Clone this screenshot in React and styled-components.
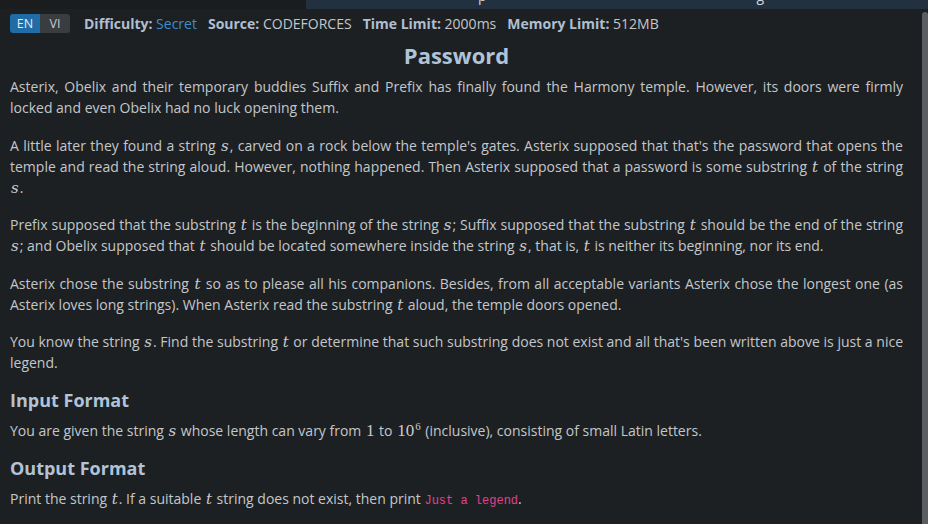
import React from "react";
import styled, { createGlobalStyle } from "styled-components";

const Global = createGlobalStyle`
  html, body { margin: 0; padding: 0; background: #1d2022; overflow: hidden; }
  body { font-family: "Open Sans", "Noto Sans", sans-serif; }
`;

const Page = styled.div`
  width: 928px;
  height: 524px;
  display: flex;
  flex-direction: column;
  background: #1d2022;
  overflow: hidden;
`;

const TopStrip = styled.div`
  height: 9px;
  display: flex;
  flex-shrink: 0;
`;

const StripDark = styled.div`
  width: 306px;
  background: #1a1c1e;
`;

const StripBlue = styled.div`
  flex: 1;
  background: #22303f;
  overflow: hidden;
`;

const StripText = styled.div`
  display: flex;
  margin-top: -13px;
  font-size: 14px;
  line-height: 18px;
  color: #d0d6dc;
  white-space: pre;
`;

const StripGlyph = styled.span`
  margin-left: ${(p) => p.$ml}px;
`;

const Main = styled.div`
  flex: 1;
  display: flex;
  min-height: 0;
`;

const Content = styled.div`
  flex: 1;
  padding: 5px 19px 0 10px;
  color: #c3c7cb;
  font-size: 14px;
  line-height: 21px;
`;

const ScrollTrack = styled.div`
  width: 6px;
  padding-top: 3px;
  display: flex;
`;

const ScrollThumb = styled.div`
  flex: 1;
  background: #5a5e62;
  border-radius: 3px 3px 0 0;
`;

const MetaRow = styled.div`
  display: flex;
  align-items: center;
  height: 19px;
  font-size: 14px;
`;

const LangToggle = styled.div`
  display: flex;
  height: 19px;
  border-radius: 3px;
  overflow: hidden;
  margin-right: 14px;
`;

const LangButton = styled.span`
  width: 30px;
  display: flex;
  align-items: center;
  justify-content: center;
  font-size: 12.5px;
  color: ${(p) => (p.$active ? "#e4ecf4" : "#c8ccd0")};
  background: ${(p) => (p.$active ? "#1f6ca6" : "#3a3d40")};
`;

const MetaItem = styled.span`
  margin-right: 11px;
  white-space: nowrap;
  color: #c3c7cb;
`;

const MetaLabel = styled.b`
  color: #aebfd2;
  font-weight: 700;
`;

const MetaValue = styled.span`
  color: ${(p) => (p.$accent ? "#3a8dd0" : "#c3c7cb")};
`;

const Title = styled.h1`
  margin: 8px 0 7px;
  text-align: center;
  font-size: 22px;
  line-height: 28px;
  font-weight: 700;
  color: #b1c3d7;
`;

const Para = styled.p`
  margin: 0 0 16.5px;
  text-align: justify;
`;

const SectionTitle = styled.h2`
  margin: 0 0 9px;
  font-size: 18px;
  line-height: 21.6px;
  font-weight: 700;
  color: #b1c3d7;
`;

const M = styled.span`
  font-family: "DejaVu Serif", "Liberation Serif", serif;
  font-style: ${(p) => (p.$roman ? "normal" : "italic")};
  font-size: ${(p) => (p.$roman ? "17px" : "15px")};
  font-family: ${(p) =>
    p.$roman ? '"Liberation Serif", "DejaVu Serif", serif' : '"DejaVu Serif", "Liberation Serif", serif'};
  line-height: 1;
  padding: 0 1px;
  color: #c8ccd0;
`;

const Sup = styled.span`
  font-size: 11px;
  display: inline-block;
  transform: translateY(-6px);
  margin-left: 1px;
`;

const Code = styled.code`
  font-family: "Liberation Mono", "DejaVu Sans Mono", monospace;
  font-size: 12px;
  color: #e0428f;
`;

export default function App() {
  return (
    <>
      <Global />
      <Page>
        <TopStrip>
          <StripDark />
          <StripBlue>
            <StripText>
              <StripGlyph $ml={172}>p</StripGlyph>
              <StripGlyph $ml={270}>g</StripGlyph>
            </StripText>
          </StripBlue>
        </TopStrip>
        <Main>
          <Content>
            <MetaRow>
              <LangToggle>
                <LangButton $active>EN</LangButton>
                <LangButton>VI</LangButton>
              </LangToggle>
              <MetaItem>
                <MetaLabel>Difficulty:</MetaLabel> <MetaValue $accent>Secret</MetaValue>
              </MetaItem>
              <MetaItem>
                <MetaLabel>Source:</MetaLabel> <MetaValue>CODEFORCES</MetaValue>
              </MetaItem>
              <MetaItem>
                <MetaLabel>Time Limit:</MetaLabel> <MetaValue>2000ms</MetaValue>
              </MetaItem>
              <MetaItem>
                <MetaLabel>Memory Limit:</MetaLabel> <MetaValue>512MB</MetaValue>
              </MetaItem>
            </MetaRow>
            <Title>Password</Title>
            <Para>
              Asterix, Obelix and their temporary buddies Suffix and Prefix has finally found the Harmony
              temple. However, its doors were firmly locked and even Obelix had no luck opening them.
            </Para>
            <Para>
              A little later they found a string <M>s</M>, carved on a rock below the temple's gates. Asterix
              supposed that that's the password that opens the temple and read the string aloud. However,
              nothing happened. Then Asterix supposed that a password is some substring <M>t</M> of the
              string <M>s</M>.
            </Para>
            <Para>
              Prefix supposed that the substring <M>t</M> is the beginning of the string <M>s</M>; Suffix
              supposed that the substring <M>t</M> should be the end of the string <M>s</M>; and Obelix
              supposed that <M>t</M> should be located somewhere inside the string <M>s</M>, that is,{" "}
              <M>t</M> is neither its beginning, nor its end.
            </Para>
            <Para>
              Asterix chose the substring <M>t</M> so as to please all his companions. Besides, from all
              acceptable variants Asterix chose the longest one (as Asterix loves long strings). When Asterix
              read the substring <M>t</M> aloud, the temple doors opened.
            </Para>
            <Para>
              You know the string <M>s</M>. Find the substring <M>t</M> or determine that such substring does
              not exist and all that's been written above is just a nice legend.
            </Para>
            <SectionTitle>Input Format</SectionTitle>
            <Para>
              You are given the string <M>s</M> whose length can vary from <M $roman>1</M> to{" "}
              <M $roman>
                10<Sup>6</Sup>
              </M>{" "}
              (inclusive), consisting of small Latin letters.
            </Para>
            <SectionTitle>Output Format</SectionTitle>
            <Para>
              Print the string <M>t</M>. If a suitable <M>t</M> string does not exist, then print{" "}
              <Code>Just a legend</Code>.
            </Para>
          </Content>
          <ScrollTrack>
            <ScrollThumb />
          </ScrollTrack>
        </Main>
      </Page>
    </>
  );
}
